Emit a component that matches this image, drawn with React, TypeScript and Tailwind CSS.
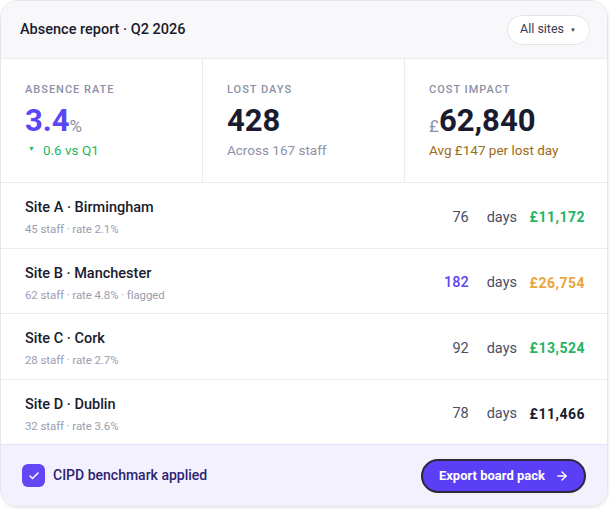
import React from 'react';
import { ArrowRight, Check } from 'lucide-react';

type Site = {
  name: string;
  meta: string;
  days: number;
  cost: string;
  daysTone: string;
  costTone: string;
};

const sites: Site[] = [
  { name: 'Site A · Birmingham', meta: '45 staff · rate 2.1%', days: 76, cost: '£11,172', daysTone: 'text-[#4a4d63]', costTone: 'text-[#22b463]' },
  { name: 'Site B · Manchester', meta: '62 staff · rate 4.8% · flagged', days: 182, cost: '£26,754', daysTone: 'text-[#5b45f5]', costTone: 'text-[#eaa53c]' },
  { name: 'Site C · Cork', meta: '28 staff · rate 2.7%', days: 92, cost: '£13,524', daysTone: 'text-[#4a4d63]', costTone: 'text-[#22b463]' },
  { name: 'Site D · Dublin', meta: '32 staff · rate 3.6%', days: 78, cost: '£11,466', daysTone: 'text-[#4a4d63]', costTone: 'text-[#1a1b2e]' },
];

const App = () => {
  return (
    <div
      className="w-[610px] h-[509px] bg-white"
      style={{ fontFamily: 'Roboto, "Noto Sans", sans-serif' }}
    >
      <div className="w-[608px] h-[507px] flex flex-col rounded-[18px] border border-[#e5e6eb] bg-white overflow-hidden shadow-[1px_2px_3px_rgba(20,20,40,0.08)]">
        {/* Header */}
        <div className="h-[58px] shrink-0 flex items-center justify-between pl-[19px] pr-[17px] bg-[#f8f8fa] border-b border-[#ebecf0]">
          <h1 className="text-[14.5px] font-medium text-[#1a1b2e]">Absence report · Q2 2026</h1>
          <button className="h-[30px] pl-[12px] pr-[13px] flex items-center gap-[6px] rounded-full bg-white border border-[#e3e4ea] text-[12.5px] text-[#3a3c52]">
            All sites
            <span className="text-[6px] text-[#3a3c52]">▼</span>
          </button>
        </div>

        {/* Stats */}
        <div className="h-[124px] shrink-0 grid grid-cols-3 border-b border-[#ebecf0]">
          <div className="px-6 pt-[23px] border-r border-[#ebecf0]">
            <div className="text-[11px] font-medium tracking-[1px] text-[#8d90a7]">ABSENCE RATE</div>
            <div className="mt-[5px] h-[32px] flex items-end leading-none">
              <span className="text-[31px] font-bold text-[#5b45f5]">3.4</span>
              <span className="text-[17px] text-[#8d90a7] mb-[1px]">%</span>
            </div>
            <div className="mt-[4px] flex items-center gap-[8px] text-[13.5px] text-[#22b463]">
              <span className="text-[7px] ml-[3px]">▼</span>
              0.6 vs Q1
            </div>
          </div>
          <div className="px-6 pt-[23px] border-r border-[#ebecf0]">
            <div className="text-[11px] font-medium tracking-[1px] text-[#8d90a7]">LOST DAYS</div>
            <div className="mt-[5px] h-[32px] flex items-end leading-none">
              <span className="text-[31px] font-bold text-[#1a1b2e]">428</span>
            </div>
            <div className="mt-[4px] text-[13.5px] text-[#8d90a7]">Across 167 staff</div>
          </div>
          <div className="px-6 pt-[23px]">
            <div className="text-[11px] font-medium tracking-[1px] text-[#8d90a7]">COST IMPACT</div>
            <div className="mt-[5px] h-[32px] flex items-end leading-none">
              <span className="text-[17px] text-[#8d90a7] mb-[1px]">£</span>
              <span className="text-[31px] font-bold text-[#1a1b2e]">62,840</span>
            </div>
            <div className="mt-[4px] text-[13.5px] text-[#9b6b14]">Avg £147 per lost day</div>
          </div>
        </div>

        {/* Site rows */}
        <div className="flex-1 flex flex-col">
          {sites.map((s, i) => (
            <div
              key={s.name}
              className={`flex-1 flex items-center pl-6 pr-[22px] pt-[5px] ${i < sites.length - 1 ? 'border-b border-[#ebecf0]' : ''}`}
            >
              <div className="flex-1">
                <div className="text-[14.5px] font-medium text-[#1a1b2e]">{s.name}</div>
                <div className="mt-[2px] text-[11.5px] tracking-[-0.1px] text-[#9a9db2]">{s.meta}</div>
              </div>
              <div className={`w-[40px] text-right text-[14.5px] ${s.daysTone} ${s.days === 182 ? 'font-medium' : ''}`}>{s.days}</div>
              <div className="ml-[18px] text-[14.5px] text-[#4a4d63]">days</div>
              <div className={`w-[68px] text-right text-[14px] font-bold tracking-[0.5px] ${s.costTone}`}>{s.cost}</div>
            </div>
          ))}
        </div>

        {/* Footer */}
        <div className="h-[62px] shrink-0 flex items-center justify-between pl-[21px] pr-[21px] bg-[#f4f1ff] border-t border-[#e6dffe]">
          <div className="flex items-center gap-[8px]">
            <div className="w-[23px] h-[23px] rounded-[6px] bg-[#6347f6] flex items-center justify-center">
              <Check size={12} strokeWidth={3} className="text-white" />
            </div>
            <span className="text-[14px] font-medium text-[#2d2470]">CIPD benchmark applied</span>
          </div>
          <button className="h-[34px] pl-[16px] pr-[15px] flex items-center gap-[10px] rounded-full bg-[#5b3ff6] border-2 border-[#2b2b3a] text-white text-[13px] font-bold">
            Export board pack
            <ArrowRight size={14} strokeWidth={2.5} />
          </button>
        </div>
      </div>
    </div>
  );
};

export default App;
